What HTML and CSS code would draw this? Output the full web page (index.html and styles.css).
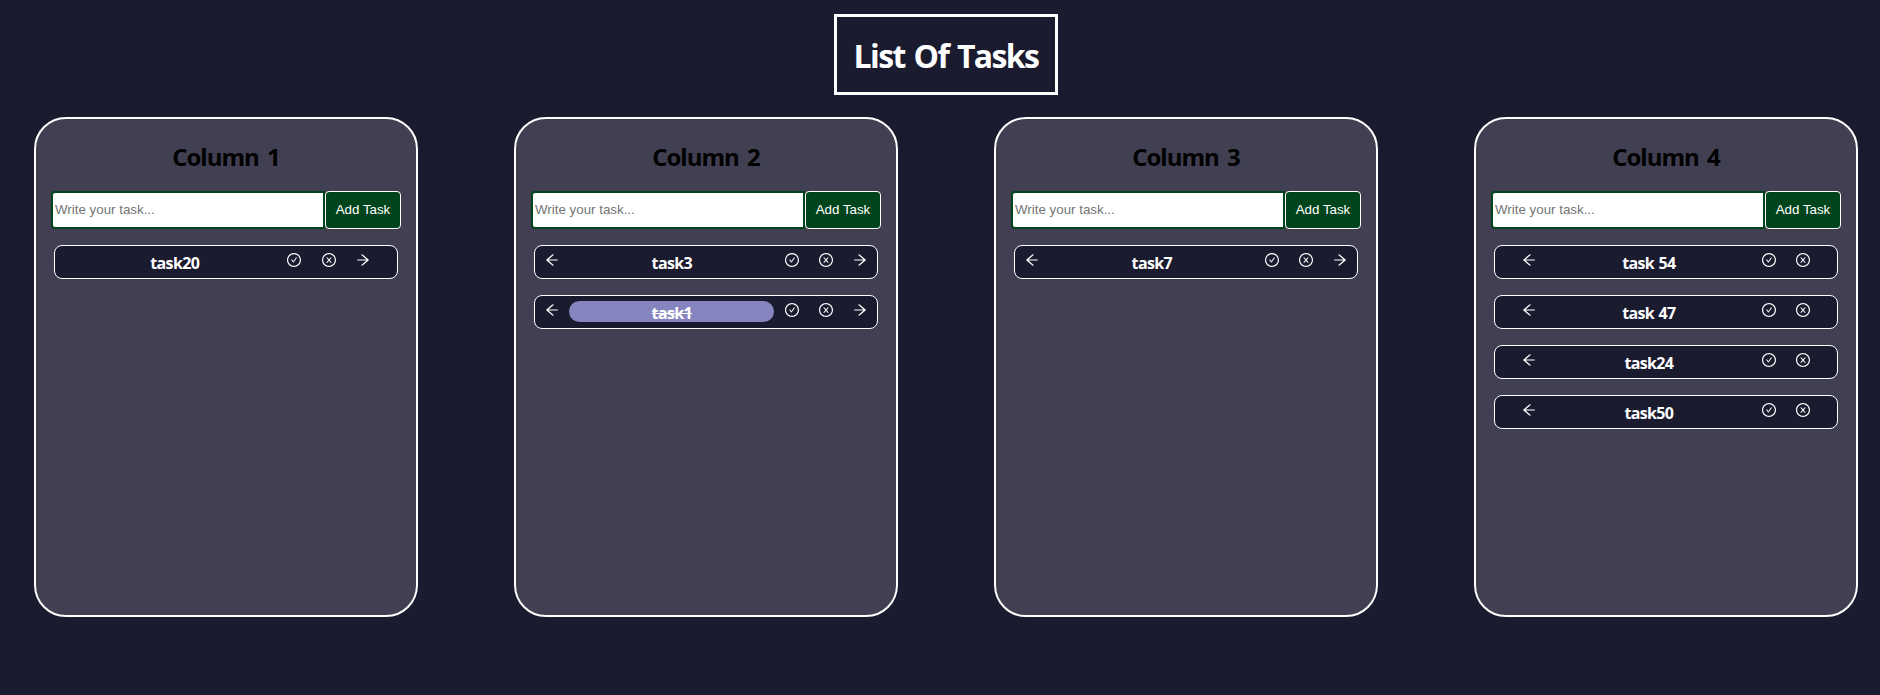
FILE: index.html
```html
<!DOCTYPE html>
<html lang="en">
<head>
<meta charset="utf-8">
<title>List Of Tasks</title>
<link rel="stylesheet" href="styles.css">
</head>
<body>
<svg class="sprite" aria-hidden="true">
  <symbol id="left" viewBox="0 0 1024 1024"><path d="M872 474H286.9l350.2-304c5.6-4.9 2.2-14-5.2-14h-88.5c-3.9 0-7.6 1.4-10.5 3.9L155 487.8a31.96 31.96 0 000 48.3L535.1 866c1.5 1.3 3.3 2 5.2 2h91.5c7.4 0 10.8-9.2 5.2-14L286.9 550H872c4.4 0 8-3.6 8-8v-60c0-4.4-3.6-8-8-8z"/></symbol>
  <symbol id="right" viewBox="0 0 1024 1024"><path d="M869 487.8L491.2 159.9c-2.9-2.5-6.6-3.9-10.5-3.9h-88.5c-7.4 0-10.8 9.2-5.2 14l350.2 304H152c-4.4 0-8 3.6-8 8v60c0 4.4 3.6 8 8 8h585.1L386.9 854c-5.6 4.9-2.2 14 5.2 14h91.5c1.9 0 3.8-.7 5.2-2L869 536.2a32.07 32.07 0 000-48.4z"/></symbol>
  <symbol id="check" viewBox="0 0 1024 1024"><path d="M699 353h-46.9c-10.2 0-19.9 4.9-25.9 13.3L469 584.3l-71.2-98.8c-6-8.3-15.6-13.3-25.9-13.3H325c-6.5 0-10.3 7.4-6.5 12.7l124.6 172.8a31.8 31.8 0 0051.7 0l210.6-292c3.9-5.3.1-12.7-6.4-12.7z"/><path d="M512 64C264.6 64 64 264.6 64 512s200.6 448 448 448 448-200.6 448-448S759.4 64 512 64zm0 820c-205.4 0-372-166.6-372-372s166.6-372 372-372 372 166.6 372 372-166.6 372-372 372z"/></symbol>
  <symbol id="close" viewBox="0 0 1024 1024"><path d="M685.4 354.8c0-4.4-3.6-8-8-8l-66 .3L512 465.6l-99.3-118.4-66.1-.3c-4.4 0-8 3.5-8 8 0 1.9.7 3.7 1.9 5.2l130.1 155L340.5 670a8.32 8.32 0 00-1.9 5.2c0 4.4 3.6 8 8 8l66.1-.3L512 564.4l99.3 118.4 66 .3c4.4 0 8-3.5 8-8 0-1.9-.7-3.7-1.9-5.2L553.5 515l130.1-155c1.2-1.4 1.8-3.3 1.8-5.2z"/><path d="M512 65C264.6 65 64 265.6 64 513s200.6 448 448 448 448-200.6 448-448S759.4 65 512 65zm0 820c-205.4 0-372-166.6-372-372s166.6-372 372-372 372 166.6 372 372-166.6 372-372 372z"/></symbol>
</svg>
<main class="page">
  <h1 class="title">List Of Tasks</h1>
  <div class="board">
    <section class="column">
      <h2 class="column-title">Column 1</h2>
      <form class="add"><input class="field" type="text" placeholder="Write your task..."><button class="submit" type="button">Add Task</button></form>
      <div class="tasks">
        <div class="task"><span class="name">task20</span><span class="icon"><svg><use href="#check"/></svg></span><span class="icon"><svg><use href="#close"/></svg></span><span class="icon"><svg><use href="#right"/></svg></span></div>
      </div>
    </section>
    <section class="column">
      <h2 class="column-title">Column 2</h2>
      <form class="add"><input class="field" type="text" placeholder="Write your task..."><button class="submit" type="button">Add Task</button></form>
      <div class="tasks">
        <div class="task"><span class="icon"><svg><use href="#left"/></svg></span><span class="name">task3</span><span class="icon"><svg><use href="#check"/></svg></span><span class="icon"><svg><use href="#close"/></svg></span><span class="icon"><svg><use href="#right"/></svg></span></div>
        <div class="task"><span class="icon"><svg><use href="#left"/></svg></span><span class="name done">task1</span><span class="icon"><svg><use href="#check"/></svg></span><span class="icon"><svg><use href="#close"/></svg></span><span class="icon"><svg><use href="#right"/></svg></span></div>
      </div>
    </section>
    <section class="column">
      <h2 class="column-title">Column 3</h2>
      <form class="add"><input class="field" type="text" placeholder="Write your task..."><button class="submit" type="button">Add Task</button></form>
      <div class="tasks">
        <div class="task"><span class="icon"><svg><use href="#left"/></svg></span><span class="name">task7</span><span class="icon"><svg><use href="#check"/></svg></span><span class="icon"><svg><use href="#close"/></svg></span><span class="icon"><svg><use href="#right"/></svg></span></div>
      </div>
    </section>
    <section class="column">
      <h2 class="column-title">Column 4</h2>
      <form class="add"><input class="field" type="text" placeholder="Write your task..."><button class="submit" type="button">Add Task</button></form>
      <div class="tasks">
        <div class="task"><span class="icon"><svg><use href="#left"/></svg></span><span class="name">task 54</span><span class="icon"><svg><use href="#check"/></svg></span><span class="icon"><svg><use href="#close"/></svg></span></div>
        <div class="task"><span class="icon"><svg><use href="#left"/></svg></span><span class="name">task 47</span><span class="icon"><svg><use href="#check"/></svg></span><span class="icon"><svg><use href="#close"/></svg></span></div>
        <div class="task"><span class="icon"><svg><use href="#left"/></svg></span><span class="name">task24</span><span class="icon"><svg><use href="#check"/></svg></span><span class="icon"><svg><use href="#close"/></svg></span></div>
        <div class="task"><span class="icon"><svg><use href="#left"/></svg></span><span class="name">task50</span><span class="icon"><svg><use href="#check"/></svg></span><span class="icon"><svg><use href="#close"/></svg></span></div>
      </div>
    </section>
  </div>
</main>
</body>
</html>
```
FILE: styles.css
```css
* { box-sizing: border-box; }
body {
  margin: 0;
  background: #1b1b2f;
  font-family: "Open Sans", "Noto Sans", sans-serif;
}
.sprite { display: none; }
.page {
  display: flex;
  flex-direction: column;
  align-items: center;
  padding: 14px 0 0 12px;
}
.title {
  width: 224px;
  height: 81px;
  margin: 0 0 22px;
  border: 3px solid #fff;
  color: #fff;
  font-size: 32px;
  line-height: 77px;
  letter-spacing: -1.6px;
  word-spacing: 2px;
  text-align: center;
  white-space: nowrap;
}
.board { display: flex; gap: 96px; }
.column {
  display: flex;
  flex-direction: column;
  align-items: center;
  width: 384px;
  height: 500px;
  padding-top: 21px;
  border: 2px solid #fff;
  border-radius: 32px;
  background: #404052;
}
.column-title {
  margin: 0 0 19px;
  font-size: 24px;
  line-height: 33px;
  height: 32px;
  letter-spacing: -1px;
  word-spacing: 3px;
  color: #000;
}
.add { display: flex; width: 350px; height: 38px; margin-bottom: 16px; }
.field {
  width: 274px;
  padding: 0 2px 1px;
  border: 2px solid #00441b;
  border-radius: 4px 0 0 4px;
  background: #fff;
  font: 13.333px "Liberation Sans", Arial, sans-serif;
}
.submit {
  width: 76px;
  padding: 0 0 1px;
  border: 1px solid #fff;
  border-radius: 4px;
  background: #00441b;
  color: #fff;
  font: 13.333px "Liberation Sans", Arial, sans-serif;
}
.tasks { display: flex; flex-direction: column; gap: 16px; }
.task {
  display: flex;
  justify-content: center;
  align-items: center;
  width: 344px;
  height: 34px;
  border: 1px solid #fff;
  border-radius: 8px;
  background: #1b1b2f;
  color: #fff;
}
.name {
  width: 60%;
  height: 21px;
  margin-bottom: 1px;
  border-radius: 10.5px;
  font-size: 16px;
  font-weight: 700;
  line-height: 24px;
  letter-spacing: -0.65px;
  word-spacing: 1px;
  text-align: center;
}
.done { background: #8785c0; text-decoration: line-through; }
.icon { display: flex; justify-content: center; width: 10%; padding-bottom: 4px; }
.icon svg { width: 16px; height: 16px; fill: currentColor; }
```
